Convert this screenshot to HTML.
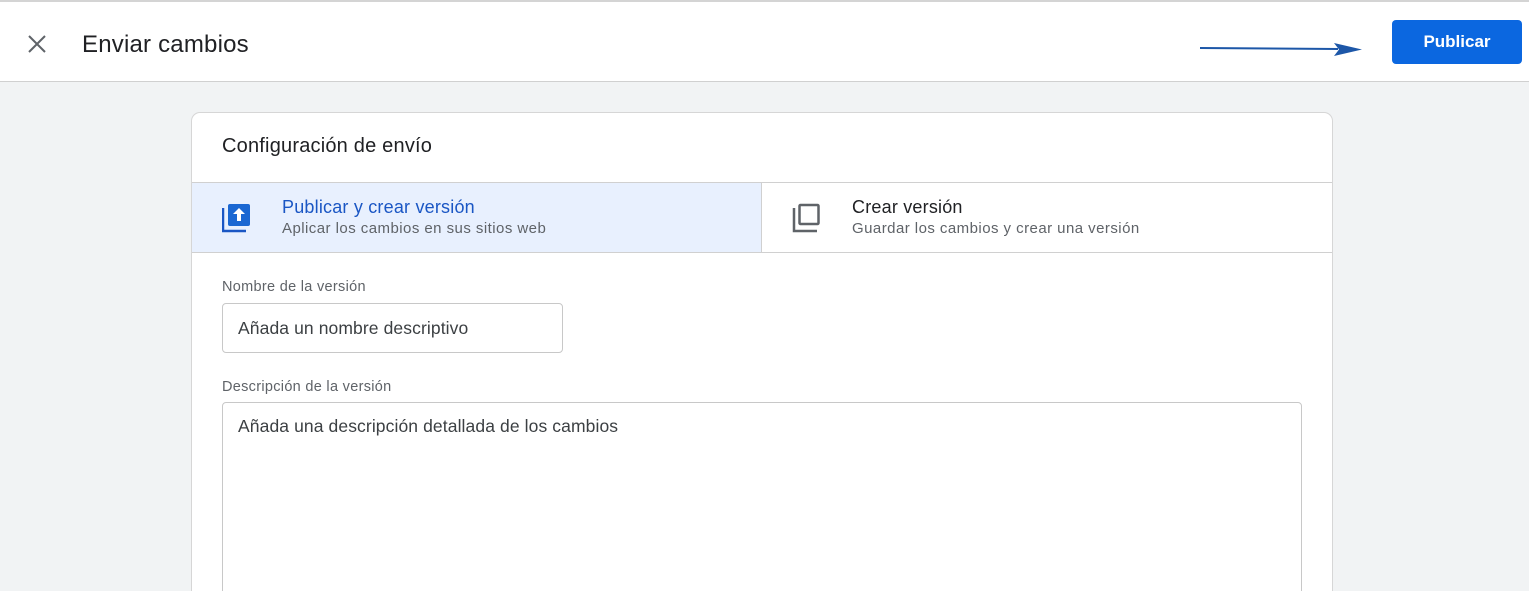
<!DOCTYPE html>
<html><head><meta charset="utf-8"><style>
*{box-sizing:border-box;margin:0;padding:0}
html,body{width:1529px;height:591px;overflow:hidden}
body{background:#f1f3f4;font-family:"Liberation Sans",Arial,sans-serif;position:relative}
.top{position:absolute;left:0;top:0;width:1529px;height:82px;background:#fff;border-top:2px solid #d4d4d4;border-bottom:1px solid #d0d0d0}
.title{position:absolute;left:82px;top:29px;font-size:24px;color:#202124;letter-spacing:.2px}
.btn{position:absolute;left:1392px;top:18px;width:130px;height:44px;background:#0b67e0;border-radius:4px;color:#fff;font-weight:bold;font-size:17px;text-align:center;line-height:44px}
.card{position:absolute;left:191px;top:112px;width:1142px;height:482px;background:#fff;border:1px solid #d6d6d6;border-bottom:none;border-radius:9px 9px 0 0;overflow:hidden}
.ch{position:absolute;left:30px;top:22px;font-size:20px;color:#202124;letter-spacing:.2px}
.tabs{position:absolute;left:0;top:69px;width:1142px;height:71px;border-top:1px solid #d0d0d0;border-bottom:1px solid #d0d0d0}
.t1{position:absolute;left:0;top:0;width:570px;height:69px;background:#e8f0fe;border-right:1px solid #d0d0d0}
.tt{position:absolute;top:14px;font-size:18px;letter-spacing:.2px}
.ts{position:absolute;top:37px;font-size:15px;color:#5f6368;letter-spacing:.45px}
.lbl{position:absolute;left:30px;font-size:14.5px;color:#5f6368;letter-spacing:.3px}
.inp{position:absolute;left:30px;border:1px solid #c8c8c8;border-radius:4px;font-size:17.5px;color:#3c4043;padding-left:15px;letter-spacing:.1px}
</style></head><body>
<div class="top">
<svg style="position:absolute;left:27px;top:32px" width="20" height="20" viewBox="0 0 20 20"><path d="M2 2L18 18M18 2L2 18" stroke="#5f6368" stroke-width="2"/></svg>
<div class="title">Enviar cambios</div>
<svg style="position:absolute;left:1198px;top:38px" width="166" height="20" viewBox="0 0 166 20"><path d="M2 8 L140 9" stroke="#1d57a8" stroke-width="2"/><path d="M136 3 L164 9.5 L136 16 L141 9.5Z" fill="#1d57a8"/></svg>
<div class="btn">Publicar</div>
</div>
<div class="card">
<div class="ch">Configuración de envío</div>
<div class="tabs">
<div class="t1">
<svg style="position:absolute;left:30px;top:20px" width="30" height="30" viewBox="0 0 30 30"><path d="M1 5V28H24" stroke="#1a56c4" stroke-width="2.5" fill="none"/><rect x="6" y="1" width="22" height="22" rx="2" fill="#1a67d2"/><path d="M17 5L11 11H15V18H19V11H23Z" fill="#fff"/></svg>
<div class="tt" style="left:90px;color:#1a56c4">Publicar y crear versión</div>
<div class="ts" style="left:90px">Aplicar los cambios en sus sitios web</div>
</div>
<svg style="position:absolute;left:600px;top:20px" width="30" height="30" viewBox="0 0 30 30"><path d="M2 5V28H25" stroke="#5f6368" stroke-width="2.5" fill="none"/><rect x="7.5" y="2" width="19" height="19" rx="1" stroke="#5f6368" stroke-width="2.5" fill="none"/></svg>
<div class="tt" style="left:660px;color:#202124">Crear versión</div>
<div class="ts" style="left:660px">Guardar los cambios y crear una versión</div>
</div>
<div class="lbl" style="top:166px">Nombre de la versión</div>
<div class="inp" style="top:190px;width:341px;height:50px;line-height:48px">Añada un nombre descriptivo</div>
<div class="lbl" style="top:266px">Descripción de la versión</div>
<div class="inp" style="top:289px;width:1080px;height:250px;padding-top:13px">Añada una descripción detallada de los cambios</div>
</div>
</body></html>
